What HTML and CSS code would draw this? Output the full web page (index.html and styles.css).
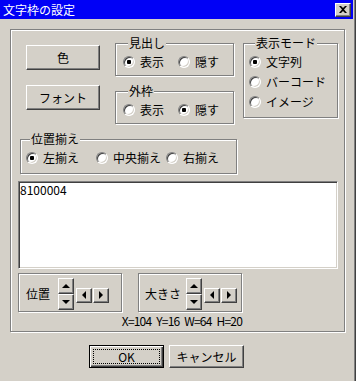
FILE: index.html
```html
<!DOCTYPE html>
<html lang="ja">
<head>
  <meta charset="UTF-8">
  <title>文字枠の設定</title>
  <link rel="stylesheet" href="styles.css">
</head>
<body>
  <div class="dialog">
    <div class="titlebar">
      <span class="title">文字枠の設定</span>
      <button class="close" aria-label="閉じる">
        <svg width="8" height="7" viewBox="0 0 8 7"><path d="M0 0h2l2 2 2-2h2L5 3.5 8 7H6L4 5 2 7H0l3-3.5z" fill="#000"/></svg>
      </button>
    </div>

    <div class="client">
      <div class="panel">
        <div class="top-row">
          <div class="btn-col">
            <button class="btn btn-wide">色</button>
            <button class="btn btn-wide">フォント</button>
          </div>

          <div class="group-col">
            <fieldset class="group group-small">
              <legend>見出し</legend>
              <div class="radio-row">
                <label class="radio radio-56"><input type="radio" name="heading" checked>表示</label>
                <label class="radio radio-56"><input type="radio" name="heading">隠す</label>
              </div>
            </fieldset>
            <fieldset class="group group-small">
              <legend>外枠</legend>
              <div class="radio-row">
                <label class="radio radio-56"><input type="radio" name="frame">表示</label>
                <label class="radio radio-56"><input type="radio" name="frame" checked>隠す</label>
              </div>
            </fieldset>
          </div>

          <fieldset class="group group-mode">
            <legend>表示モード</legend>
            <div class="radio-list">
              <label class="radio"><input type="radio" name="mode" checked>文字列</label>
              <label class="radio"><input type="radio" name="mode">バーコード</label>
              <label class="radio"><input type="radio" name="mode">イメージ</label>
            </div>
          </fieldset>
        </div>

        <fieldset class="group group-align">
          <legend>位置揃え</legend>
          <div class="radio-row">
            <label class="radio radio-70"><input type="radio" name="align" checked>左揃え</label>
            <label class="radio radio-70"><input type="radio" name="align">中央揃え</label>
            <label class="radio"><input type="radio" name="align">右揃え</label>
          </div>
        </fieldset>

        <textarea class="text">8100004</textarea>

        <div class="adjust">
          <div class="spin-row">
            <div class="spin-box">
              <span class="spin-label">位置</span>
              <div class="spin-v">
                <button class="mini arrow-up"></button>
                <button class="mini arrow-down"></button>
              </div>
              <div class="spin-h">
                <button class="mini arrow-left"></button>
                <button class="mini arrow-right"></button>
              </div>
            </div>
            <div class="spin-box spin-box-size">
              <span class="spin-label">大きさ</span>
              <div class="spin-v">
                <button class="mini arrow-up"></button>
                <button class="mini arrow-down"></button>
              </div>
              <div class="spin-h">
                <button class="mini arrow-left"></button>
                <button class="mini arrow-right"></button>
              </div>
            </div>
          </div>
          <div class="coords">X=104 Y=16 W=64 H=20</div>
        </div>
      </div>

      <div class="actions">
        <button class="btn btn-default">OK</button>
        <button class="btn btn-action">キャンセル</button>
      </div>
    </div>
  </div>
</body>
</html>
```

FILE: styles.css
```css
body {
  margin: 0;
  background: #d4d0c8;
  font-family: "Noto Sans CJK JP", "DejaVu Sans", sans-serif;
  font-size: 12px;
  line-height: 12px;
  color: #000;
}

.dialog {
  width: 356px;
  height: 381px;
  background: #d4d0c8;
  box-shadow: inset -1px 0 #404040, inset -2px 0 #808080;
  overflow: hidden;
}

/* title bar */
.titlebar {
  height: 19px;
  margin-right: 3px;
  background: #0000f6;
  display: flex;
  align-items: center;
  justify-content: space-between;
  padding-left: 3px;
  padding-right: 2px;
}

.title {
  color: #fff;
  font-size: 12px;
  line-height: 12px;
}

.close {
  width: 16px;
  height: 14px;
  padding: 0;
  margin: 0;
  background: #d4d0c8;
  border: 1px solid;
  border-color: #fff #404040 #404040 #fff;
  box-shadow: inset -1px -1px #808080;
  display: flex;
  align-items: center;
  justify-content: center;
}

/* client area */
.client {
  padding: 10px 11px 0 10px;
}

.panel {
  box-sizing: border-box;
  height: 303px;
  border: 1px solid #808080;
  box-shadow: inset 1px 1px #fff, 1px 1px #fff;
}

.top-row {
  display: flex;
  align-items: flex-start;
}

.btn-col {
  display: flex;
  flex-direction: column;
  gap: 15px;
  margin: 15px 0 0 15px;
}

.btn {
  font-family: inherit;
  font-size: 12px;
  line-height: 12px;
  color: #000;
  background: #d4d0c8;
  padding: 0;
  margin: 0;
  border: 1px solid;
  border-color: #fff #404040 #404040 #fff;
  box-shadow: inset -1px -1px #808080;
}

.btn-wide {
  width: 74px;
  height: 25px;
}

.group-col {
  display: flex;
  flex-direction: column;
  gap: 9px;
  margin: 7px 0 0 15px;
}

/* group boxes */
.group {
  box-sizing: border-box;
  margin: 0;
  padding: 0;
  min-width: 0;
  border: 1px solid #808080;
  box-shadow: inset 1px 1px #fff, 1px 1px #fff;
}

.group legend {
  padding: 0 1px;
  margin-left: 5px;
  font-size: 12px;
  line-height: 12px;
  background: #d4d0c8;
}

.group-small {
  width: 119px;
  height: 39px;
  padding: 6px 0 0 7px;
}

.group-mode {
  width: 95px;
  height: 81px;
  margin: 7px 0 0 9px;
  padding: 6px 0 0 5px;
}

.group-mode legend {
  margin-left: 6px;
}

.group-align {
  width: 217px;
  height: 41px;
  margin: 9px 0 0 9px;
  padding: 6px 0 0 5px;
}

.group-align legend {
  margin-left: 4px;
}

.radio-row {
  display: flex;
}

.radio-list {
  display: flex;
  flex-direction: column;
  gap: 7px;
}

.radio {
  display: inline-flex;
  align-items: center;
  gap: 5px;
  height: 13px;
  white-space: nowrap;
}

.radio-56 {
  width: 56px;
}

.radio-70 {
  width: 70px;
}

.radio input {
  appearance: none;
  -webkit-appearance: none;
  box-sizing: border-box;
  width: 12px;
  height: 12px;
  margin: 0;
  border-radius: 50%;
  border: 1px solid;
  border-color: #808080 #fff #fff #808080;
  background: #fff;
  box-shadow: inset 1px 1px #404040, inset -1px -1px #d4d0c8;
}

.radio input:checked {
  background: radial-gradient(circle, #000 0, #000 2px, #fff 2.5px);
}

/* text field */
.text {
  display: block;
  box-sizing: border-box;
  width: 320px;
  height: 88px;
  margin: 7px 0 0 7px;
  padding: 2px 1px;
  resize: none;
  overflow: hidden;
  font-family: inherit;
  font-size: 12px;
  line-height: 12px;
  color: #000;
  background: #fff;
  border: 1px solid;
  border-color: #808080 #fff #fff #808080;
  box-shadow: inset 1px 1px #404040, inset -1px -1px #d4d0c8;
  outline: none;
}

/* position / size */
.adjust {
  width: 224px;
  margin: 4px 0 0 7px;
}

.spin-row {
  display: flex;
  gap: 16px;
}

.spin-box {
  box-sizing: border-box;
  width: 104px;
  height: 39px;
  border: 1px solid #808080;
  box-shadow: inset 1px 1px #fff, 1px 1px #fff;
  display: flex;
  align-items: center;
  padding: 3px 0 0 7px;
}

.spin-label {
  margin-right: 8px;
}

.spin-box-size {
  padding-left: 6px;
}

.spin-box-size .spin-label {
  margin-right: 5px;
}

.spin-v {
  display: flex;
  flex-direction: column;
}

.spin-h {
  display: flex;
  gap: 1px;
  margin: 2px 0 0 2px;
}

.mini {
  box-sizing: border-box;
  width: 16px;
  height: 16px;
  padding: 0;
  margin: 0;
  background: #d4d0c8;
  border: 1px solid;
  border-color: #fff #404040 #404040 #fff;
  box-shadow: inset -1px -1px #808080;
  display: flex;
  align-items: center;
  justify-content: center;
}

.spin-h .mini {
  height: 15px;
}

.mini::before {
  content: "";
  width: 0;
  height: 0;
  border: 4px solid transparent;
}

.arrow-up::before {
  border-top: 0;
  border-bottom-color: #000;
}

.arrow-down::before {
  border-bottom: 0;
  border-top-color: #000;
}

.arrow-left::before {
  border-left: 0;
  border-right-color: #000;
}

.arrow-right::before {
  border-right: 0;
  border-left-color: #000;
}

.coords {
  margin-top: 3px;
  text-align: right;
  white-space: nowrap;
  letter-spacing: -0.8px;
  word-spacing: 3px;
}

/* dialog buttons */
.actions {
  display: flex;
  gap: 5px;
  margin-top: 13px;
  padding-left: 79px;
}

.btn-default,
.btn-action {
  width: 75px;
  height: 23px;
}

.btn-default {
  border: 1px solid #000;
  box-shadow: inset 1px 1px #fff, inset -1px -1px #404040, inset -2px -2px #808080;
  outline: 1px dotted #000;
  outline-offset: -5px;
}
```
